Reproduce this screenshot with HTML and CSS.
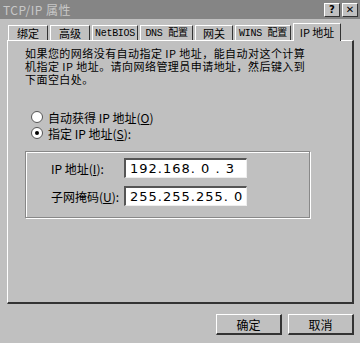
FILE: index.html
```html
<!DOCTYPE html>
<html lang="zh">
<head>
    <meta charset="UTF-8">
    <title>TCP/IP 属性</title>
    <link rel="stylesheet" href="styles.css">
</head>
<body>
    <div class="window">
        <div class="titlebar">
            <span class="title">TCP/IP 属性</span>
            <div class="title-buttons">
                <span class="tbtn">?</span>
                <span class="tbtn">✕</span>
            </div>
        </div>

        <div class="tabs">
            <div class="tab t1">绑定</div>
            <div class="tab t2">高级</div>
            <div class="tab t3 mono">NetBIOS</div>
            <div class="tab t4 mono">DNS 配置</div>
            <div class="tab t5">网关</div>
            <div class="tab t6 mono">WINS 配置</div>
            <div class="tab t7 active">IP 地址</div>
        </div>

        <div class="panel">
            <p class="intro">如果您的网络没有自动指定 IP 地址，能自动对这个计算<br>机指定 IP 地址。请向网络管理员申请地址，然后键入到<br>下面空白处。</p>

            <div class="radios">
                <label class="radio"><span class="dot"></span>自动获得 IP 地址(<u>O</u>)</label>
                <label class="radio"><span class="dot checked"></span>指定 IP 地址(<u>S</u>):</label>
            </div>

            <div class="group">
                <div class="field">
                    <span class="field-label">IP 地址(<u>I</u>):</span>
                    <span class="ipbox">192.168.&nbsp;0&nbsp;.&nbsp;3</span>
                </div>
                <div class="field">
                    <span class="field-label">子网掩码(<u>U</u>):</span>
                    <span class="ipbox">255.255.255.&nbsp;0</span>
                </div>
            </div>
        </div>

        <div class="footer">
            <button class="btn">确定</button>
            <button class="btn">取消</button>
        </div>
    </div>
</body>
</html>
```

FILE: styles.css
```css
body {
    margin: 0;
    background-color: #c0c0c0;
    font-family: "Noto Sans CJK SC", "DejaVu Sans", sans-serif;
    font-size: 12px;
    color: #000;
}

.window {
    width: 360px;
    height: 343px;
    overflow: hidden;
}

.titlebar {
    height: 19px;
    background-color: #858585;
    display: flex;
    align-items: center;
    justify-content: space-between;
    padding: 0 2px 0 3px;
}

.title {
    color: #c8c8c8;
    font-size: 12px;
    letter-spacing: 0.5px;
}

.title-buttons {
    display: flex;
    gap: 2px;
}

.tbtn {
    width: 14px;
    height: 12px;
    background-color: #c0c0c0;
    border-top: 1px solid #fff;
    border-left: 1px solid #fff;
    border-right: 1px solid #333;
    border-bottom: 1px solid #333;
    font-family: "DejaVu Sans", sans-serif;
    font-size: 10px;
    font-weight: bold;
    line-height: 12px;
    text-align: center;
}

.tabs {
    display: flex;
    margin-top: 3px;
    padding-left: 8px;
    height: 18px;
    align-items: flex-end;
}

.tab {
    height: 15px;
    line-height: 15px;
    box-sizing: border-box;
    border-top: 1px solid #fff;
    border-left: 1px solid #fff;
    border-right: 1px solid #333;
    margin-right: 2px;
    white-space: nowrap;
    text-align: center;
    font-size: 11px;
}

.mono {
    font-family: "Liberation Mono", "Noto Sans CJK SC", monospace;
    font-size: 10px;
    letter-spacing: -0.3px;
}

.t1 { width: 40px; }
.t2 { width: 40px; }
.t3 { width: 46px; }
.t4 { width: 53px; }
.t5 { width: 38px; }
.t6 { width: 56px; }
.t7 { width: 48px; }

.tab.active {
    height: 18px;
    line-height: 17px;
    position: relative;
    top: 1px;
    background-color: #c0c0c0;
    margin-right: 0;
    font-size: 11px;
}

.panel {
    margin: 0 6px 0 7px;
    height: 264px;
    border-top: 1px solid #fff;
    border-left: 1px solid #fff;
    border-right: 2px solid #333;
    border-bottom: 2px solid #333;
    padding: 6px 0 0 17px;
    box-sizing: border-box;
}

.intro {
    margin: 0;
    line-height: 13px;
    font-size: 11px;
    letter-spacing: 0.45px;
}

.radios {
    margin-top: 24px;
    display: flex;
    flex-direction: column;
    gap: 2px;
    padding-left: 6px;
}

.radio {
    display: flex;
    align-items: center;
    height: 14px;
}

.dot {
    width: 10px;
    height: 10px;
    border-radius: 50%;
    background-color: #fff;
    border: 1px solid #555;
    margin-right: 5px;
    position: relative;
}

.dot.checked::after {
    content: "";
    position: absolute;
    left: 3px;
    top: 3px;
    width: 4px;
    height: 4px;
    border-radius: 50%;
    background-color: #000;
}

.group {
    margin-top: 11px;
    width: 285px;
    height: 67px;
    border: 1px solid #888;
    box-shadow: 1px 1px 0 #fff, inset 1px 1px 0 #fff;
    box-sizing: border-box;
    padding: 6px 0 0 25px;
    display: flex;
    flex-direction: column;
    gap: 8px;
}

.field {
    display: flex;
    align-items: center;
}

.field-label {
    width: 73px;
}

.ipbox {
    width: 116px;
    height: 17px;
    background-color: #fff;
    border-top: 2px solid #555;
    border-left: 2px solid #555;
    border-right: 1px solid #eee;
    border-bottom: 1px solid #eee;
    font-family: "DejaVu Sans", sans-serif;
    font-size: 13px;
    line-height: 17px;
    padding-left: 4px;
    letter-spacing: 1px;
}

.footer {
    display: flex;
    justify-content: flex-end;
    gap: 6px;
    padding: 10px 6px 0 0;
}

.btn {
    width: 66px;
    height: 21px;
    background-color: #c0c0c0;
    border-top: 1px solid #fff;
    border-left: 1px solid #fff;
    border-right: 2px solid #333;
    border-bottom: 2px solid #333;
    font-family: "Noto Sans CJK SC", sans-serif;
    font-size: 12px;
    padding: 0;
}
```
